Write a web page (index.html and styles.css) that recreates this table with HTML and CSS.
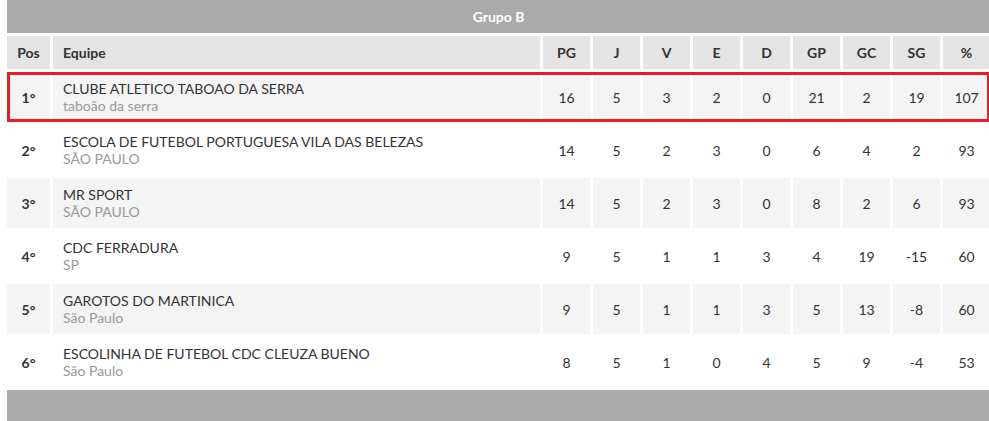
FILE: index.html
```html
<!DOCTYPE html>
<html lang="pt-BR">
  <head>
    <meta charset="UTF-8" />
    <title>Classificação - Grupo B</title>
    <link rel="stylesheet" href="styles.css">
  </head>
  <body>
    <table class="tabela">
      <colgroup>
        <col class="col-pos" />
        <col class="col-equipe" />
        <col class="col-num" span="9" />
      </colgroup>
      <thead>
        <tr>
          <th class="grupo" colspan="11">Grupo B</th>
        </tr>
        <tr class="cabecalho">
          <th class="pos">Pos</th>
          <th class="equipe">Equipe</th>
          <th>PG</th>
          <th>J</th>
          <th>V</th>
          <th>E</th>
          <th>D</th>
          <th>GP</th>
          <th>GC</th>
          <th>SG</th>
          <th>%</th>
        </tr>
      </thead>
      <tbody>
        <tr class="linha destaque">
          <td class="pos">1°</td>
          <td class="equipe">CLUBE ATLETICO TABOAO DA SERRA<span class="cidade">taboão da serra</span></td>
          <td>16</td><td>5</td><td>3</td><td>2</td><td>0</td><td>21</td><td>2</td><td>19</td><td>107</td>
        </tr>
        <tr class="linha">
          <td class="pos">2°</td>
          <td class="equipe">ESCOLA DE FUTEBOL PORTUGUESA VILA DAS BELEZAS<span class="cidade">SÃO PAULO</span></td>
          <td>14</td><td>5</td><td>2</td><td>3</td><td>0</td><td>6</td><td>4</td><td>2</td><td>93</td>
        </tr>
        <tr class="linha">
          <td class="pos">3°</td>
          <td class="equipe">MR SPORT<span class="cidade">SÃO PAULO</span></td>
          <td>14</td><td>5</td><td>2</td><td>3</td><td>0</td><td>8</td><td>2</td><td>6</td><td>93</td>
        </tr>
        <tr class="linha">
          <td class="pos">4°</td>
          <td class="equipe">CDC FERRADURA<span class="cidade">SP</span></td>
          <td>9</td><td>5</td><td>1</td><td>1</td><td>3</td><td>4</td><td>19</td><td>-15</td><td>60</td>
        </tr>
        <tr class="linha">
          <td class="pos">5°</td>
          <td class="equipe">GAROTOS DO MARTINICA<span class="cidade">São Paulo</span></td>
          <td>9</td><td>5</td><td>1</td><td>1</td><td>3</td><td>5</td><td>13</td><td>-8</td><td>60</td>
        </tr>
        <tr class="linha">
          <td class="pos">6°</td>
          <td class="equipe">ESCOLINHA DE FUTEBOL CDC CLEUZA BUENO<span class="cidade">São Paulo</span></td>
          <td>8</td><td>5</td><td>1</td><td>0</td><td>4</td><td>5</td><td>9</td><td>-4</td><td>53</td>
        </tr>
      </tbody>
      <tfoot>
        <tr>
          <td class="rodape" colspan="11"></td>
        </tr>
      </tfoot>
    </table>
  </body>
</html>
```

FILE: styles.css
```css
body {
  margin: 0;
  overflow: hidden;
  font-family: Lato, "Open Sans", sans-serif;
  font-size: 14px;
  color: #333;
  background-color: #fff;
}
.tabela {
  border-collapse: separate;
  border-spacing: 3px;
  margin: -3px 0 0 4px;
  width: 989px;
  table-layout: fixed;
}
.col-pos {
  width: 43px;
}
.col-equipe {
  width: 487px;
}
.col-num {
  width: 47px;
}
.tabela th,
.tabela td {
  padding: 0;
  text-align: center;
}
.tabela .pos {
  font-weight: bold;
}
.tabela .equipe {
  padding-left: 10px;
  text-align: left;
}
.grupo {
  height: 33px;
  background-color: #aaa;
  color: #fff;
  font-weight: bold;
}
.cabecalho th {
  height: 33px;
  background-color: #e4e4e4;
  font-weight: bold;
}
.linha td {
  height: 50px;
  line-height: 17px;
}
.linha:nth-child(odd) td {
  background-color: #f4f4f4;
}
.destaque {
  outline: 3px solid #ec1c24;
  outline-offset: -3px;
}
.cidade {
  display: block;
  color: #999;
}
.rodape {
  height: 32px;
  background-color: #aaa;
}
```
